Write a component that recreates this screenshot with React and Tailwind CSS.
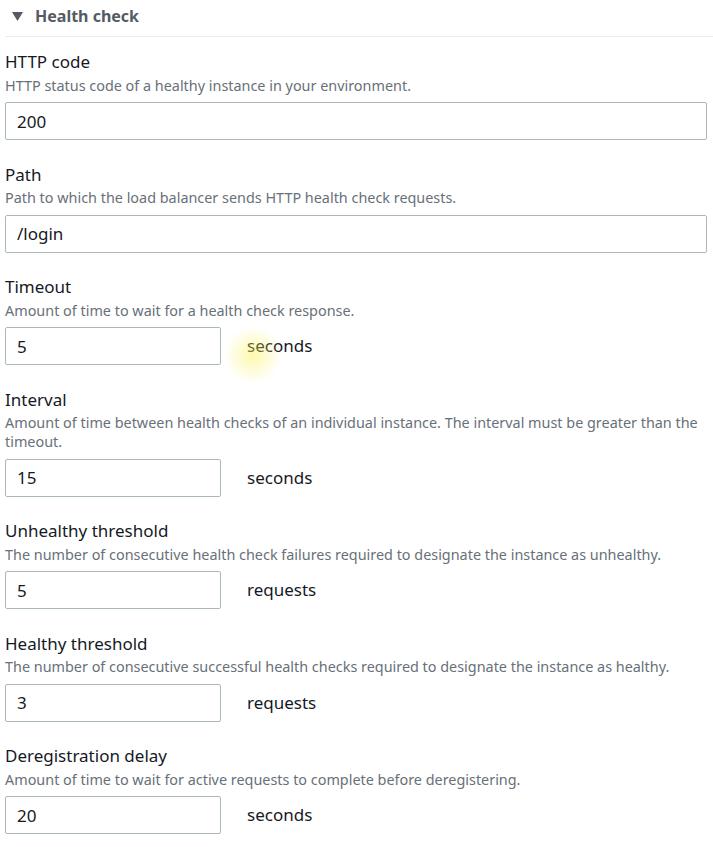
import React from 'react';

const fields = [
    { label: 'HTTP code', desc: 'HTTP status code of a healthy instance in your environment.', value: '200', full: true },
    { label: 'Path', desc: 'Path to which the load balancer sends HTTP health check requests.', value: '/login', full: true },
    { label: 'Timeout', desc: 'Amount of time to wait for a health check response.', value: '5', unit: 'seconds' },
    { label: 'Interval', desc: 'Amount of time between health checks of an individual instance. The interval must be greater than the timeout.', value: '15', unit: 'seconds' },
    { label: 'Unhealthy threshold', desc: 'The number of consecutive health check failures required to designate the instance as unhealthy.', value: '5', unit: 'requests' },
    { label: 'Healthy threshold', desc: 'The number of consecutive successful health checks required to designate the instance as healthy.', value: '3', unit: 'requests' },
    { label: 'Deregistration delay', desc: 'Amount of time to wait for active requests to complete before deregistering.', value: '20', unit: 'seconds' },
];

const Field = ({ field }) => (
    <div className="mb-[22.5px]">
        <div className="text-[17px] leading-[24px] text-[#16191f]">{field.label}</div>
        <div className="text-[14.4px] leading-[19px] text-[#687078] mt-[1.5px]">{field.desc}</div>
        <div className="flex items-center mt-[7.5px]">
            <input
                readOnly
                value={field.value}
                className={`${field.full ? 'w-[702px]' : 'w-[216px]'} h-[38px] border border-[#aab7b8] rounded-[2px] px-[11px] text-[17px] text-[#16191f] bg-white outline-none`}
            />
            {field.unit && (
                <span className="relative ml-[26px] text-[17px] text-[#16191f]">
                    {field.unit}
                    {field.label === 'Timeout' && (
                        <span className="absolute -left-[26px] -top-[4px] w-[64px] h-[52px] rounded-full bg-[radial-gradient(circle,rgba(248,244,90,0.5),rgba(248,244,90,0)_70%)] pointer-events-none" />
                    )}
                </span>
            )}
        </div>
    </div>
);

export default function App() {
    return (
        <div className="w-[713px] min-h-[847px] bg-white font-['Noto_Sans',sans-serif] pl-[5px] overflow-hidden">
            <div className="flex items-center h-[37px] pb-[5px] border-b border-[#eaeded] pl-[7px]">
                <svg width="11" height="9" viewBox="0 0 11 9" className="mr-[12px] mt-[1px]">
                    <polygon points="0,0 11,0 5.5,9" fill="#545b64" />
                </svg>
                <span className="text-[16px] font-bold text-[#545b64]">Health check</span>
            </div>
            <div className="pt-[13px]">
                {fields.map((f) => (
                    <Field key={f.label} field={f} />
                ))}
            </div>
        </div>
    );
}
